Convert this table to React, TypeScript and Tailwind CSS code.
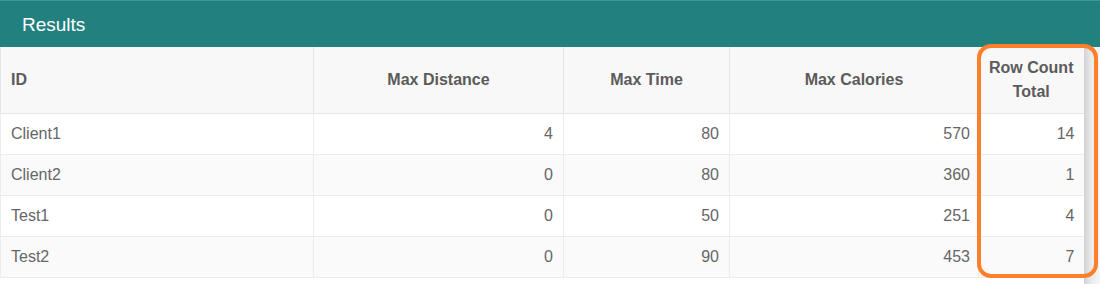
import React from "react";

const rows = [
  { id: "Client1", d: 4, t: 80, c: 570, r: 14 },
  { id: "Client2", d: 0, t: 80, c: 360, r: 1 },
  { id: "Test1", d: 0, t: 50, c: 251, r: 4 },
  { id: "Test2", d: 0, t: 90, c: 453, r: 7 },
];

export default function App() {
  return (
    <div
      className="relative w-[1100px] h-[284px] bg-white overflow-hidden"
      style={{ fontFamily: '"Liberation Sans", Arial, sans-serif' }}
    >
      <div className="h-[47px] bg-[#22807e] border-t border-[#3a9896] flex items-center pl-[22px]">
        <span className="text-white text-[19px] leading-none">Results</span>
      </div>
      <div className="flex items-start">
        <table className="table-fixed border-collapse w-[1083px] text-[16px]">
          <colgroup>
            <col className="w-[313px]" />
            <col className="w-[250px]" />
            <col className="w-[166px]" />
            <col className="w-[249px]" />
            <col className="w-[105px]" />
          </colgroup>
          <thead>
            <tr className="h-[66px] bg-[#f8f8f8] text-[#5b5b5b] font-bold">
              <th className="border border-[#e6e6e6] border-t-0 text-left px-[10px]">ID</th>
              <th className="border border-[#e6e6e6] border-t-0 text-center px-[10px]">Max Distance</th>
              <th className="border border-[#e6e6e6] border-t-0 text-center px-[10px]">Max Time</th>
              <th className="border border-[#e6e6e6] border-t-0 text-center px-[10px]">Max Calories</th>
              <th className="border border-[#e6e6e6] border-t-0 border-r-0 text-center px-[4px] leading-[24px]">
                Row Count
                <br />
                Total
              </th>
            </tr>
          </thead>
          <tbody className="text-[#666666]">
            {rows.map((row, i) => (
              <tr key={row.id} className={`h-[41px] ${i % 2 === 1 ? "bg-[#fafafa]" : "bg-white"}`}>
                <td className="border border-[#ececec] text-left px-[10px] py-0 leading-[20px]">{row.id}</td>
                <td className="border border-[#ececec] text-right px-[10px] py-0 leading-[20px]">{row.d}</td>
                <td className="border border-[#ececec] text-right px-[10px] py-0 leading-[20px]">{row.t}</td>
                <td className="border border-[#ececec] text-right px-[8px] py-0 leading-[20px]">{row.c}</td>
                <td className="border border-[#ececec] border-r-0 text-right px-[9px] py-0 leading-[20px]">{row.r}</td>
              </tr>
            ))}
          </tbody>
        </table>
        <div className="flex-1 h-[237px] bg-gradient-to-r from-[#d2d2d2] via-[#ececec] to-[#f6f6f6]" />
      </div>
      <div className="absolute left-[977px] top-[44px] w-[121px] h-[234px] border-4 border-[#fd7f2a] rounded-[14px] pointer-events-none" />
    </div>
  );
}
